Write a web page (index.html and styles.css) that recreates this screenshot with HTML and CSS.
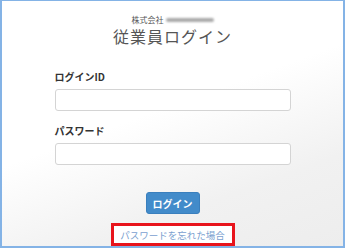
FILE: index.html
```html
<!DOCTYPE html>
<html lang="ja">

<head>
  <meta charset="UTF-8" />
  <meta name="viewport" content="width=device-width, initial-scale=1" />
  <title>従業員ログイン</title>
  <link rel="stylesheet" href="styles.css">
</head>

<body>
  <div class="frame">
    <div class="company">株式会社<span class="masked"></span></div>
    <h1>従業員ログイン</h1>

    <form class="login-form">
      <label for="loginId">ログインID</label>
      <input type="text" id="loginId" />
      <label for="password">パスワード</label>
      <input type="password" id="password" />
      <div class="actions">
        <button type="submit">ログイン</button>
      </div>
    </form>

    <div class="forgot">
      <a href="#">パスワードを忘れた場合</a>
    </div>
  </div>
</body>

</html>
```

FILE: styles.css
```css
body {
  margin: 0;
  background: #fff;
  font-family: "Noto Sans CJK JP", "Liberation Sans", sans-serif;
}

.frame {
  width: 341px;
  height: 245px;
  border-style: solid;
  border-color: #84b3e6;
  border-width: 1px 2px 2px 2px;
  background: linear-gradient(160deg, #ffffff 0%, #ffffff 45%, #f1f1f1 75%, #ededed 100%);
  display: flex;
  flex-direction: column;
  align-items: center;
}

.company {
  margin-top: 13px;
  height: 12px;
  font-size: 8px;
  line-height: 12px;
  color: #555;
  display: flex;
  align-items: center;
}

.masked {
  display: inline-block;
  width: 48px;
  height: 4px;
  margin-left: 2px;
  border-radius: 2px;
  background: #aaa;
  filter: blur(0.8px);
}

h1 {
  margin: 0;
  font-size: 16px;
  line-height: 20px;
  font-weight: normal;
  color: #555;
  letter-spacing: 1px;
}

.login-form {
  width: 236px;
  margin-top: 24px;
}

label {
  display: block;
  font-size: 10px;
  line-height: 14px;
  font-weight: bold;
  color: #333;
  margin-bottom: 5px;
}

input {
  display: block;
  box-sizing: border-box;
  width: 100%;
  height: 22px;
  border: 1px solid #d4d4d4;
  border-radius: 3px;
  background: #fff;
  margin: 0 0 13px;
}

.actions {
  display: flex;
  justify-content: center;
  margin-top: 27px;
}

button {
  width: 54px;
  height: 22px;
  background-color: #428bca;
  color: #fff;
  border: 1px solid #3a7fbd;
  border-radius: 3px;
  font-family: inherit;
  font-size: 10px;
  font-weight: bold;
  padding: 0;
}

.forgot {
  margin-top: 9px;
  box-sizing: border-box;
  width: 124px;
  height: 23px;
  border: 3px solid #e8141c;
  display: flex;
  justify-content: center;
  align-items: center;
  background: #fff;
}

.forgot a {
  font-size: 9.5px;
  color: #7b9fd0;
  text-decoration: none;
}
```
